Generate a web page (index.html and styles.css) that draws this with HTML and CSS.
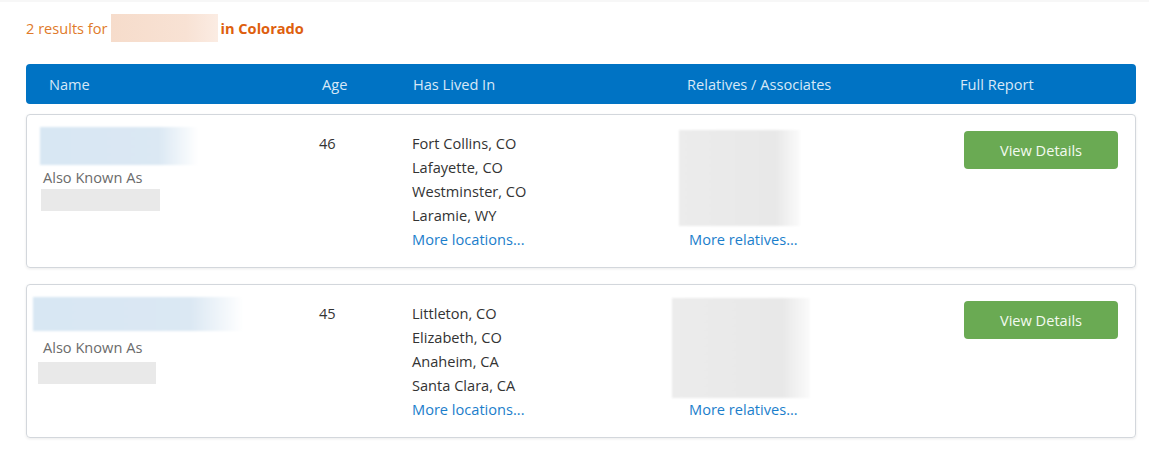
FILE: index.html
```html
<!DOCTYPE html>
<html>
<head>
<meta charset="utf-8">
<link rel="stylesheet" href="styles.css">
</head>
<body>
<div class="page">
  <p class="summary">2 results for <span class="redact-query"></span><strong>in Colorado</strong></p>
  <div class="thead">
    <div>Name</div>
    <div>Age</div>
    <div>Has Lived In</div>
    <div>Relatives / Associates</div>
    <div>Full Report</div>
  </div>

  <div class="card">
    <div class="col-name">
      <div class="blur-name n1"></div>
      <div class="aka">Also Known As</div>
      <div class="blur-aka a1"></div>
    </div>
    <div class="col-age">46</div>
    <div class="col-loc">
      <div>Fort Collins, CO</div>
      <div>Lafayette, CO</div>
      <div>Westminster, CO</div>
      <div>Laramie, WY</div>
      <a href="#">More locations...</a>
    </div>
    <div class="col-rel">
      <div class="blur-rel r1"></div>
      <a href="#">More relatives...</a>
    </div>
    <div class="col-btn"><a class="btn" href="#">View Details</a></div>
  </div>

  <div class="card">
    <div class="col-name">
      <div class="blur-name n2"></div>
      <div class="aka">Also Known As</div>
      <div class="blur-aka a2"></div>
    </div>
    <div class="col-age">45</div>
    <div class="col-loc">
      <div>Littleton, CO</div>
      <div>Elizabeth, CO</div>
      <div>Anaheim, CA</div>
      <div>Santa Clara, CA</div>
      <a href="#">More locations...</a>
    </div>
    <div class="col-rel">
      <div class="blur-rel r2"></div>
      <a href="#">More relatives...</a>
    </div>
    <div class="col-btn"><a class="btn" href="#">View Details</a></div>
  </div>
</div>
</body>
</html>
```

FILE: styles.css
```css
* { box-sizing: border-box; }
html, body { margin: 0; padding: 0; background: #fff; }
body {
  font-family: "Open Sans", "Noto Sans", sans-serif;
  font-size: 14.6px;
  color: #333;
  border-top: 2px solid #f7f7f7;
}
.page { width: 1110px; margin-left: 26px; }
.summary {
  margin: 0;
  padding-top: 5px;
  height: 46px;
  display: flex;
  align-items: center;
  color: #e07a2a;
}
.redact-query {
  display: inline-block;
  width: 107px;
  height: 28px;
  margin-left: 4px;
  background: linear-gradient(90deg, #f6dccb, #f8e2d4 70%, #fbece3);
}
.summary strong { color: #de5f0e; font-weight: 700; margin-left: 2px; }
.thead {
  margin-top: 16px;
  height: 40px;
  background: #0073c4;
  border-radius: 4px;
  color: #d7e8f7;
  display: grid;
  grid-template-columns: 273px 91px 274px 273px 1fr;
  align-items: center;
  padding-left: 23px;
}
.card {
  margin-top: 10px;
  margin-bottom: 16px;
  border: 1px solid #d3d7dc;
  border-radius: 4px;
  box-shadow: 0 1px 3px rgba(0,0,0,0.08);
  height: 154px;
  display: grid;
  grid-template-columns: 279px 93px 267px 285px 154px;
  padding: 16px 0 0 13px;
  line-height: 24px;
}
.card + .card { margin-top: 0; }
.col-name { margin-top: -4px; }
.blur-name {
  background: linear-gradient(90deg, #d8e7f3, #dbe8f3 75%, #fff);
  filter: blur(1px);
}
.n1 { width: 158px; height: 38px; }
.n2 { width: 210px; height: 34px; margin-left: -7px; }
.aka { color: #6b6b6b; padding-left: 3px; }
.n2 + .aka { margin-top: 4px; }
.blur-aka { background: #e9e9e9; height: 22px; }
.a1 { width: 119px; margin-left: 1px; }
.a2 { width: 118px; margin-left: -2px; margin-top: 3px; }
.col-loc a, .col-rel a { color: #1b7ecb; text-decoration: none; display: block; }
.col-rel { display: flex; flex-direction: column; align-items: flex-start; }
.blur-rel {
  background: linear-gradient(90deg, #ececec, #e8e8e8 80%, #fbfbfb);
  filter: blur(1px);
}
.r1 { width: 121px; height: 96px; margin-top: -1px; margin-bottom: 1px; }
.r2 { width: 138px; height: 100px; margin-left: -7px; margin-top: -3px; margin-bottom: -1px; }
.col-rel a { margin-left: 10px; }
.btn {
  display: flex;
  align-items: center;
  justify-content: center;
  height: 38px;
  width: 154px;
  background: #6aaa53;
  color: #f3faf0;
  text-decoration: none;
  border-radius: 4px;
}
```
